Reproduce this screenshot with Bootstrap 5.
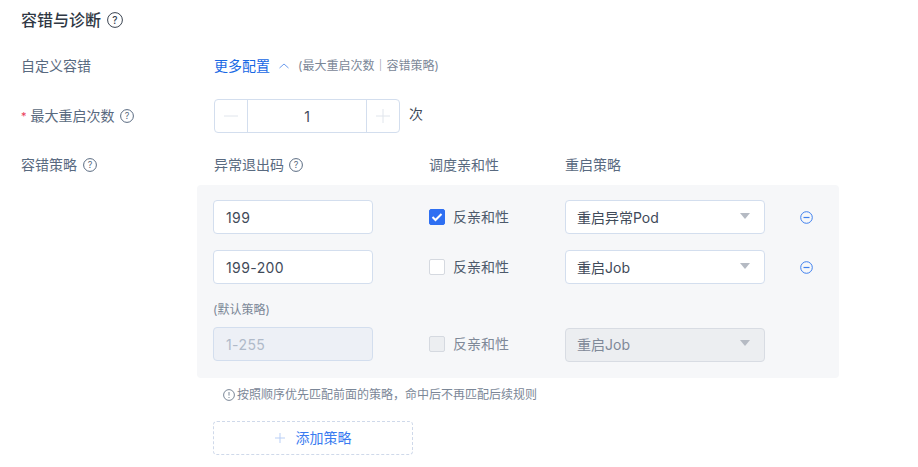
<!DOCTYPE html>
<html lang="zh-CN">
<head>
<meta charset="utf-8">
<title>容错与诊断</title>
<link href="https://cdn.jsdelivr.net/npm/bootstrap@5.3.0/dist/css/bootstrap.min.css" rel="stylesheet">
<style>
html,body{height:467px;overflow:hidden}
body{font-family:Inter,"Noto Sans CJK SC","Liberation Sans",sans-serif;font-size:14px;line-height:20px;color:#596a80;background:#fff;padding:10px 0 0 21px}
.sec-title{font-size:16px;font-weight:500;color:#2f3844;gap:6px;height:20px}
.qmark{flex:none;display:block}
.qmark.tight{margin-left:-1px}
.form-line{display:flex;align-items:center}
.line-more{margin-top:26px;height:20px}
.line-step{margin-top:23px}
.lab{width:193px;flex:none;display:flex;align-items:center;gap:6px}
.req{color:#ea3a5b;font-size:11px;margin-right:-2px}
.link-more{color:#1768e4;font-weight:400;text-decoration:none}
.faint{font-size:12px;color:#7b8797}
.stepper{width:186px;height:34px;border:1px solid #d3deee;border-radius:4px;display:flex;background:#fff}
.step-btn{width:32px;flex:none;display:flex;align-items:center;justify-content:center}
.step-val{flex:1;border-left:1px solid #d3deee;border-right:1px solid #d3deee;text-align:center;line-height:34px;color:#3f4a59;font-size:14px}
.unit{color:#3f4a59;margin-left:9px;margin-top:-4px}
.heads{margin-top:22px;height:20px}
.h-a{width:215px;flex:none;display:flex;align-items:center;gap:5px}
.h-b{width:136px;flex:none}
.panel{margin-left:176px;width:642px;background:#f6f7f9;border-radius:4px;padding:15px 0 16px 16px;margin-top:10px;height:193px}
.pol-row{display:flex;align-items:center;height:34px;margin-bottom:16px}
.txt-box{width:160px;height:34px;border:1px solid #d3deee;border-radius:4px;background:#fff;color:#3f4a59;padding:0 12px;line-height:34px;flex:none;letter-spacing:.4px}
.txt-box.off{background:#edf0f6;color:#b0bac9}
.chk-cell{margin-left:56px;width:136px;flex:none;display:flex;align-items:center;gap:8px;color:#4d5a6b}
.chk{width:16px;height:16px;border:1px solid #d5d9e0;border-radius:2px;background:#fff;display:flex;align-items:center;justify-content:center;flex:none}
.chk.on{background:#2e6ff2;border-color:#2e6ff2}
.chk.off{background:#eceef1}
.chk-cell.off{color:#7f8998}
.pick{width:200px;height:34px;border:1px solid #d3deee;border-radius:4px;background:#fff;color:#3f4a59;padding:1px 14px 0 11px;display:flex;align-items:center;justify-content:space-between;flex:none}
.pick.off{background:#eceef1;color:#7f8998;border-color:#d8dce3;margin-top:1px}
.tri{width:0;height:0;border-left:5px solid transparent;border-right:5px solid transparent;border-top:6px solid #b5bac3;display:block;margin-top:-4px}
.minus-ic{margin-left:35px;display:block;flex:none}
.def-lab{font-size:12px;color:#7b8797;height:16px;line-height:16px;margin-top:18px;margin-bottom:9px}
.hint{margin-left:202px;margin-top:7px;font-size:12px;color:#7b8797;gap:2px;height:20px}
.add-btn{margin-left:192px;margin-top:16px;width:200px;height:34px;border:1px dashed #cfd9ea;border-radius:4px;color:#3a7bf0;display:flex;align-items:center;justify-content:center;gap:11px;background:#fff}
</style>
</head>
<body>
<div class="d-flex align-items-center sec-title">容错与诊断
<svg class="qmark" width="16" height="16" viewBox="0 0 16 16" fill="none"><circle cx="8" cy="8" r="7.4" stroke="#3a4350"/><text x="8" y="11.5" font-size="10" text-anchor="middle" fill="#3a4350" font-family="Inter">?</text></svg>
</div>
<div class="form-line line-more">
  <div class="lab">自定义容错</div>
  <a class="link-more" href="#">更多配置</a>
  <svg class="ms-2" width="12" height="12" viewBox="0 0 12 12" fill="none"><path d="M1.5 8 6 4l4.5 4" stroke="#6b9bee"/></svg>
  <span class="faint ms-2">(最大重启次数｜容错策略)</span>
</div>
<div class="form-line line-step">
  <div class="lab"><span class="req">*</span><span>最大重启次数</span>
  <svg class="qmark tight" width="14" height="14" viewBox="0 0 14 14" fill="none"><circle cx="7" cy="7" r="6.4" stroke="#596a80"/><text x="7" y="10" font-size="9" text-anchor="middle" fill="#596a80" font-family="Inter">?</text></svg></div>
  <div class="stepper">
    <div class="step-btn"><svg width="14" height="14" viewBox="0 0 14 14"><path d="M0 7h14" stroke="#e0e5ec"/></svg></div>
    <div class="step-val">1</div>
    <div class="step-btn"><svg width="14" height="14" viewBox="0 0 14 14"><path d="M0 7h14M7 0v14" stroke="#e0e5ec"/></svg></div>
  </div>
  <span class="unit">次</span>
</div>
<div class="form-line heads">
  <div class="lab"><span>容错策略</span><svg class="qmark" width="14" height="14" viewBox="0 0 14 14" fill="none"><circle cx="7" cy="7" r="6.4" stroke="#596a80"/><text x="7" y="10" font-size="9" text-anchor="middle" fill="#596a80" font-family="Inter">?</text></svg></div>
  <div class="h-a"><span>异常退出码</span><svg class="qmark" width="14" height="14" viewBox="0 0 14 14" fill="none"><circle cx="7" cy="7" r="6.4" stroke="#596a80"/><text x="7" y="10" font-size="9" text-anchor="middle" fill="#596a80" font-family="Inter">?</text></svg></div>
  <div class="h-b">调度亲和性</div>
  <div>重启策略</div>
</div>
<div class="panel">
  <div class="pol-row">
    <div class="txt-box">199</div>
    <div class="chk-cell"><span class="chk on"><svg width="12" height="10" viewBox="0 0 12 10" fill="none"><path d="M1.5 5 4.5 8 10.5 2" stroke="#fff" stroke-width="2"/></svg></span>反亲和性</div>
    <div class="pick"><span>重启异常Pod</span><i class="tri"></i></div>
    <svg class="minus-ic" width="13" height="13" viewBox="0 0 13 13" fill="none"><circle cx="6.5" cy="6.5" r="5.8" stroke="#3f80ee"/><path d="M3.5 6.5h6" stroke="#3f80ee" stroke-width="1.2"/></svg>
  </div>
  <div class="pol-row">
    <div class="txt-box">199-200</div>
    <div class="chk-cell"><span class="chk"></span>反亲和性</div>
    <div class="pick"><span>重启Job</span><i class="tri"></i></div>
    <svg class="minus-ic" width="13" height="13" viewBox="0 0 13 13" fill="none"><circle cx="6.5" cy="6.5" r="5.8" stroke="#3f80ee"/><path d="M3.5 6.5h6" stroke="#3f80ee" stroke-width="1.2"/></svg>
  </div>
  <div class="def-lab">(默认策略)</div>
  <div class="pol-row">
    <div class="txt-box off">1-255</div>
    <div class="chk-cell off"><span class="chk off"></span>反亲和性</div>
    <div class="pick off"><span>重启Job</span><i class="tri"></i></div>
  </div>
</div>
<div class="d-flex align-items-center hint">
  <svg width="12" height="12" viewBox="0 0 12 12" fill="none"><circle cx="6" cy="6" r="5.4" stroke="#7b8797"/><path d="M6 3v3.6M6 8v1" stroke="#7b8797"/></svg>
  <span>按照顺序优先匹配前面的策略，命中后不再匹配后续规则</span>
</div>
<div class="add-btn"><svg width="10" height="10" viewBox="0 0 10 10"><path d="M0 5h10M5 0v10" stroke="#b9cff6"/></svg><span>添加策略</span></div>
</body>
</html>
